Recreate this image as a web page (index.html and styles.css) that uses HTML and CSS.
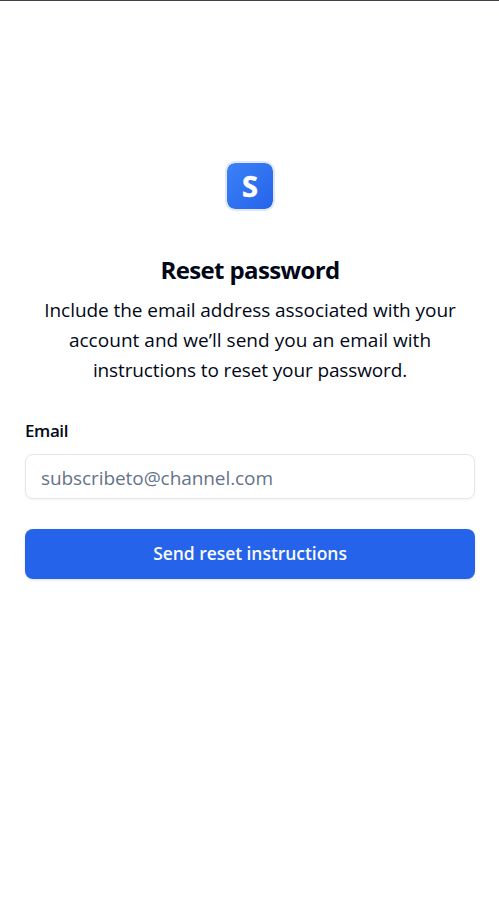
FILE: index.html
```html
<!DOCTYPE html>
<html lang="en">
<head>
<meta charset="utf-8">
<title>Reset password</title>
<link rel="stylesheet" href="styles.css">
</head>
<body>
<main class="page">
  <div class="logo"><span class="logo-letter">S</span></div>
  <header class="intro">
    <h1 class="title">Reset password</h1>
    <p class="description"><span class="tight">Include the email address associated with your</span><br><span class="loose">account and we’ll send you an email with</span><br><span class="tighter">instructions to reset your password.</span></p>
  </header>
  <form class="form">
    <label class="label" for="email">Email</label>
    <input class="input" id="email" type="email" placeholder="subscribeto@channel.com">
    <button class="button" type="button">Send reset instructions</button>
  </form>
</main>
</body>
</html>
```
FILE: styles.css
```css
* { box-sizing: border-box; }
body {
  margin: 0;
  background: #fff;
  color: #020817;
  font-family: "Open Sans", "Noto Sans", sans-serif;
}
.page {
  display: flex;
  flex-direction: column;
  align-items: center;
  min-height: 910px;
  padding: 160px 24px 0 25px;
  border-top: 1px solid #41414d;
}
.logo {
  display: flex;
  align-items: center;
  justify-content: center;
  width: 50px;
  height: 50px;
  border: 2px solid #e2e8f0;
  border-radius: 10px;
  background: linear-gradient(135deg, #3b82f6, #2563eb) padding-box;
}
.logo-letter {
  color: #fff;
  font-family: "Noto Sans", sans-serif;
  font-size: 29px;
  font-weight: 700;
  line-height: 46px;
  -webkit-text-stroke: 0.5px #fff;
}
.intro { margin-top: 39px; text-align: center; }
.title {
  margin: 0;
  font-size: 24px;
  font-weight: 700;
  line-height: 40px;
  letter-spacing: -0.62px;
}
.description {
  margin: 5px 0 0;
  font-size: 19px;
  line-height: 30px;
  white-space: nowrap;
}
.tight { letter-spacing: -0.06px; }
.loose { letter-spacing: 0.03px; }
.tighter { letter-spacing: -0.12px; }
.form { display: flex; flex-direction: column; width: 100%; }
.label {
  margin-top: 36px;
  font-size: 17px;
  font-weight: 600;
  line-height: 20px;
  letter-spacing: -0.4px;
}
.input {
  width: 100%;
  height: 45px;
  margin-top: 13px;
  padding: 4px 15px 2px;
  border: 1px solid #e2e8f0;
  border-radius: 8px;
  background: #fff;
  box-shadow: 0 1px 3px rgba(0, 0, 0, .05);
  font: 19px "Open Sans", sans-serif;
  letter-spacing: -0.08px;
}
.input::placeholder { color: #64748b; }
.button {
  height: 50px;
  margin-top: 30px;
  padding: 0 0 2px;
  border: 0;
  border-radius: 8px;
  background: #2563eb;
  box-shadow: 0 1px 3px rgba(0, 0, 0, .12);
  color: #f8fafc;
  font: 600 17.5px "Open Sans", sans-serif;
  letter-spacing: -0.05px;
}
```
